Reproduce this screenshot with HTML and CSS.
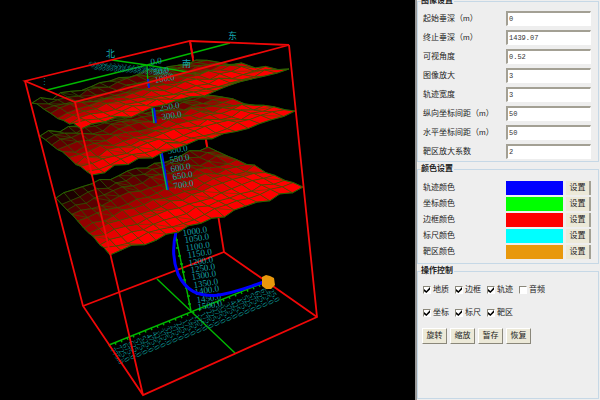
FILE: index.html
```html
<!DOCTYPE html>
<html lang="zh-CN">
<head>
<meta charset="utf-8">
<title>井眼轨迹三维视图</title>
<link rel="stylesheet" href="styles.css">
</head>
<body>
<main class="app">
  <section class="view">
    <svg class="scene" viewBox="0 0 415 400" role="img">
      <g class="frame">
        <path d="M190 41L224 252"/>
        <path d="M83 306L224 252L317 317"/>
      </g>
      <g class="axis">
        <path d="M109 345L268 281M157 279L235 353M175 232L191 311"/>
        <path d="M175 240h3M176 248h3M178 256h3M180 264h3M182 272h3M183 280h3M185 288h3M187 296h3M188 304h3"/>
      </g>
      <g id="floor-labels" class="scale dim"></g>
      <g id="low-depths" class="scale"></g>
      <path class="track" d="M176 232C172 248 173 261 178 274C186 291 198 296 215 295.500C232 294 248 287 264 282"/>
      <path class="target" d="M262 277L266 275L270 276L274 278L275 285L271 289L266 289L262 286Z"/>
      <g id="surface-3"></g>
      <path class="frame" d="M205 130L207 147"/>
      <path class="track-thin" d="M161 148L168 190"/>
      <path class="axis-side" d="M159 148L167 190"/>
      <g id="mid-depths" class="scale"></g>
      <g id="surface-2"></g>
      <path class="track-thin" d="M154 108L156 123"/>
      <path class="axis-side" d="M152 108L154 123"/>
      <g id="upper-depths" class="scale"></g>
      <g id="surface-1"></g>
      <g class="axis">
        <path d="M47 90L147 65L230 43M112 60L147 65L187 72M147 65L148 86"/>
      </g>
      <path class="track-thin" d="M148 79L149 88"/>
      <g id="roof-labels" class="scale dim"></g>
      <g id="top-depths" class="scale"></g>
      <g class="compass">
        <text x="106" y="57">北</text>
        <text x="228" y="39">东</text>
        <text x="182" y="67">南</text>
        <text class="far" x="40" y="85">⋮</text>
      </g>
      <g class="frame">
        <path d="M25 81L190 41L289 45L75 102Z"/>
        <path d="M25 81L83 306L143 395L317 317L289 45M75 102L143 395M190 41L193 58"/>
      </g>
    </svg>
  </section>

  <aside class="panel">
    <fieldset class="group">
      <legend>图像设置</legend>
      <div class="field"><label for="f1">起始垂深（m）</label><input id="f1" type="text" value="0"></div>
      <div class="field"><label for="f2">终止垂深（m）</label><input id="f2" type="text" value="1439.07"></div>
      <div class="field"><label for="f3">可视角度</label><input id="f3" type="text" value="0.52"></div>
      <div class="field"><label for="f4">图像放大</label><input id="f4" type="text" value="3"></div>
      <div class="field"><label for="f5">轨迹宽度</label><input id="f5" type="text" value="3"></div>
      <div class="field"><label for="f6">纵向坐标间距（m）</label><input id="f6" type="text" value="50"></div>
      <div class="field"><label for="f7">水平坐标间距（m）</label><input id="f7" type="text" value="50"></div>
      <div class="field"><label for="f8">靶区放大系数</label><input id="f8" type="text" value="2"></div>
    </fieldset>

    <fieldset class="group colors">
      <legend>颜色设置</legend>
      <div class="color"><span>轨迹颜色</span><i class="swatch blue"></i><button type="button">设置</button></div>
      <div class="color"><span>坐标颜色</span><i class="swatch green"></i><button type="button">设置</button></div>
      <div class="color"><span>边框颜色</span><i class="swatch red"></i><button type="button">设置</button></div>
      <div class="color"><span>标尺颜色</span><i class="swatch cyan"></i><button type="button">设置</button></div>
      <div class="color"><span>靶区颜色</span><i class="swatch orange"></i><button type="button">设置</button></div>
    </fieldset>

    <fieldset class="group controls">
      <legend>操作控制</legend>
      <div class="checks">
        <label><input type="checkbox" checked>地质</label>
        <label><input type="checkbox" checked>边框</label>
        <label><input type="checkbox" checked>轨迹</label>
        <label><input type="checkbox">音频</label>
      </div>
      <div class="checks">
        <label><input type="checkbox" checked>坐标</label>
        <label><input type="checkbox" checked>标尺</label>
        <label><input type="checkbox" checked>靶区</label>
      </div>
      <div class="actions">
        <button type="button">旋转</button>
        <button type="button">缩放</button>
        <button type="button">暂存</button>
        <button type="button">恢复</button>
      </div>
    </fieldset>
  </aside>
</main>
<script src="scene.js"></script>
</body>
</html>
```
FILE: scene.js
```js
const NS = "http://www.w3.org/2000/svg";

function add(parent, name, attrs, text) {
  const el = document.createElementNS(NS, name);
  for (const key in attrs) el.setAttribute(key, attrs[key]);
  if (text) el.textContent = text;
  parent.appendChild(el);
  return el;
}

function random(seed) {
  let s = seed;
  return () => (s = (s * 16807) % 2147483647) / 2147483647;
}

// Corners run left, back, right, front; u follows the long side, v comes forward.
function surface(id, corners, cols, rows, rough, lift, dark, seed) {
  const host = document.getElementById(id);
  const rnd = random(seed);
  const [l, b, r, f] = corners;
  const grid = [];
  for (let j = 0; j <= rows; j++) {
    const line = [];
    const v = j / rows;
    for (let i = 0; i <= cols; i++) {
      const u = i / cols;
      const mix = k => (1 - v) * ((1 - u) * l[k] + u * b[k]) + v * ((1 - u) * f[k] + u * r[k]);
      const corner = (i === 0 || i === cols) && (j === 0 || j === rows);
      const n = corner ? 0 : (rnd() - 0.5) * rough;
      const hump = (1 - v) * Math.sin(Math.PI * u) * lift;
      line.push([mix(0) + n * 0.5, mix(1) + n - hump]);
    }
    grid.push(line);
  }
  const pt = p => p[0].toFixed(1) + " " + p[1].toFixed(1);
  for (let j = 0; j < rows; j++) {
    for (let i = 0; i < cols; i++) {
      const v = (j + 0.5) / rows;
      const u = i / cols;
      const level = dark + v * (290 - dark) + u * 70 + (rnd() - 0.5) * 24;
      const red = Math.max(20, Math.min(255, Math.round(level)));
      const a = grid[j][i], c = grid[j][i + 1], d = grid[j + 1][i + 1], e = grid[j + 1][i];
      add(host, "path", {
        d: `M${pt(a)}L${pt(c)}L${pt(d)}L${pt(e)}Z`,
        fill: `rgb(${red},0,0)`,
        class: "cell"
      });
      if (rnd() > 0.75) add(host, "path", { d: `M${pt(a)}L${pt(d)}`, class: "crease" });
    }
  }
  const edge = [...grid[0], ...grid.map(g => g[cols]), ...grid[rows].slice().reverse(), ...grid.map(g => g[0]).reverse()];
  add(host, "path", { d: "M" + edge.map(pt).join("L") + "Z", class: "rim" });
}

surface("surface-3", [[56, 198], [208, 147], [303, 187], [110, 255]], 17, 10, 4, 2, 15, 77);
surface("surface-2", [[40, 136], [203, 95], [295, 111], [92, 175]], 17, 9, 5, 3, 15, 911);
surface("surface-1", [[32, 103], [196, 60], [289, 69], [81, 129]], 17, 8, 5, 3, 0, 4242);

function depths(id, from, to, x, y, dx, dy) {
  const host = document.getElementById(id);
  for (let d = from, i = 0; d <= to; d += 50, i++) {
    const px = Math.round(x + i * dx), py = Math.round(y + i * dy);
    add(host, "text", { x: px, y: py, transform: `rotate(-9 ${px} ${py})` }, d.toFixed(1));
  }
}

depths("top-depths", 0, 0, 151, 65, 0, 0);
depths("top-depths", 50, 100, 154, 75, 1, 8);
depths("upper-depths", 250, 300, 160, 111, 2, 9);
depths("mid-depths", 500, 700, 168, 154, 1.6, 8.8);
depths("low-depths", 1000, 1500, 183, 236, 1.5, 7.4);

function ruler(id, count, from, to, size, length, angle) {
  const host = document.getElementById(id);
  for (let i = 0; i < count; i++) {
    const t = i / (count - 1);
    const x = from[0] + (to[0] - from[0]) * t;
    const y = from[1] + (to[1] - from[1]) * t;
    const value = String(Math.abs(i - count / 2) * 50 + 100).slice(0, length) + ".0";
    add(host, "text", {
      x: x.toFixed(1), y: y.toFixed(1), "font-size": size,
      transform: `rotate(${angle} ${x.toFixed(1)} ${y.toFixed(1)})`
    }, value);
  }
}

ruler("floor-labels", 27, [110, 350], [266, 288], 8, 3, 56);
ruler("roof-labels", 20, [88, 64], [162, 70], 6, 2, 40);

const axis = document.querySelector(".axis");
for (let i = 0; i < 27; i++) {
  const x = 109 + i * 6, y = 345 - i * 2.41;
  add(axis, "path", { d: `M${x} ${y.toFixed(1)}l1 2` });
}
```
FILE: styles.css
```css
* { box-sizing: border-box; }

body {
  margin: 0;
  background: #eee;
  color: #222;
  font: 8px/12px "Liberation Sans", "Noto Sans CJK SC", sans-serif;
}

.app {
  display: grid;
  grid-template-columns: minmax(0, 1fr) 185px;
  height: 100vh;
  overflow: hidden;
}

.view { background: #000; overflow: hidden; }
.scene { display: block; width: 100%; height: 100%; }

.frame { fill: none; stroke: #f00808; stroke-width: 1.8; }
.axis { fill: none; stroke: #00b800; stroke-width: 1.4; }
.axis-side { stroke: #00b050; stroke-width: 1.4; }
.track { fill: none; stroke: #00f; stroke-width: 3; }
.track-thin { stroke: #0018f0; stroke-width: 2; }
.target { fill: #e8980c; }
.cell { stroke: #2c6400; stroke-width: 0.7; stroke-opacity: 0.8; }
.crease { stroke: #2c6400; stroke-width: 0.5; }
.rim { fill: none; stroke: #286000; stroke-width: 1; }
.scale { fill: #14a0a8; font-family: "Liberation Serif", serif; font-size: 9px; }
.scale.dim { fill: #0a8c8c; }
.compass { fill: #14a8b0; font-family: "Noto Sans CJK SC", sans-serif; font-size: 9px; }
.far { fill: #087880; }

.panel {
  display: flex;
  flex-direction: column;
  gap: 1px;
  margin-top: -5px;
  padding: 0 1px 1px 0;
  border-left: 2px solid #999;
  background: #eee;
}

.group {
  min-width: 0;
  margin: 0;
  padding: 2px 7px 0 3px;
  border: 1px solid #c6d8e6;
}

.group legend {
  padding: 0 1px 0 0;
  font-weight: 700;
  line-height: 12px;
}

.field,
.color {
  display: grid;
  align-items: center;
  padding-left: 2px;
}

.field { grid-template-columns: 83px minmax(0, 1fr); height: 19px; }
.field label { white-space: nowrap; }

.field input {
  width: 100%;
  height: 15px;
  margin: 0;
  padding: 0 1px 1px;
  border: 1px solid #fff;
  border-top: 2px solid #a3a094;
  border-left: 2px solid #a3a094;
  border-radius: 0;
  background: #fff;
  color: #333;
  font: 7px/10px "Liberation Mono", monospace;
}

.colors { padding-top: 5px; padding-bottom: 3px; }
.color { grid-template-columns: 83px minmax(0, 1fr) 25px; height: 16px; }
.swatch { height: 14px; margin-right: 3px; }
.blue { background: #00f; }
.green { background: #0f0; }
.red { background: #f00; }
.cyan { background: #0ff; }
.orange { background: #e8980c; }

button {
  width: 25px;
  height: 16px;
  padding: 0;
  border: 1px solid;
  border-color: #fff #8a877a #8a877a #fff;
  border-radius: 0;
  background: #ece9d8;
  color: #222;
  font: inherit;
}

.color button {
  height: 14px;
  border-width: 0 2px 0 0;
  border-color: #a3a094;
  line-height: 14px;
}

.controls { flex: 1; padding-top: 5px; }
.checks { display: flex; height: 16px; margin-bottom: 7px; padding-left: 2px; }
.checks label { display: flex; align-items: center; gap: 2px; width: 32px; white-space: nowrap; }

.checks input {
  appearance: none;
  flex: none;
  width: 8px;
  height: 8px;
  margin: 0;
  border: 1px solid #fff;
  border-top-color: #8a877a;
  border-left-color: #8a877a;
  background: #fff;
}

.checks input:checked::before {
  content: "";
  display: block;
  width: 6px;
  height: 6px;
  background: #000;
  clip-path: polygon(0 35%, 40% 65%, 100% 0, 100% 40%, 40% 100%, 0 70%);
}

.actions { display: flex; gap: 3px; padding-left: 1px; }
```
